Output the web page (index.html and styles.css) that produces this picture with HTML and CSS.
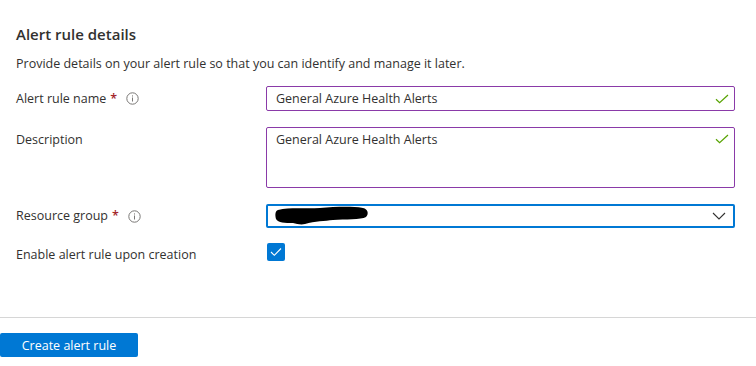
FILE: index.html
```html
<!DOCTYPE html>
<html>
<head>
<meta charset="utf-8">
<link rel="stylesheet" href="styles.css">
</head>
<body>
<div class="page">
  <section class="details">
    <h2 class="title">Alert rule details</h2>
    <p class="intro">Provide details on your alert rule so that you can identify and manage it later.</p>

    <div class="row">
      <div class="label">Alert rule name <span class="req">*</span>
        <svg class="info" width="13" height="13" viewBox="0 0 13 13"><circle cx="6.5" cy="6.5" r="5.7" fill="none" stroke="#797775" stroke-width="1"/><rect x="6" y="5.5" width="1" height="4" fill="#797775"/><rect x="6" y="3.4" width="1" height="1.1" fill="#797775"/></svg>
      </div>
      <div class="field input valid">
        <span class="value">General Azure Health Alerts</span>
        <svg class="check" width="14" height="10" viewBox="0 0 14 10"><path d="M1 5.2 L4.6 8.6 L13 1" fill="none" stroke="#57a300" stroke-width="1.2"/></svg>
      </div>
    </div>

    <div class="row top">
      <div class="label desc-label">Description</div>
      <div class="field textarea valid">
        <span class="value">General Azure Health Alerts</span>
        <svg class="check" width="14" height="10" viewBox="0 0 14 10"><path d="M1 5.2 L4.6 8.6 L13 1" fill="none" stroke="#57a300" stroke-width="1.2"/></svg>
      </div>
    </div>

    <div class="row">
      <div class="label">Resource group <span class="req">*</span>
        <svg class="info" width="13" height="13" viewBox="0 0 13 13"><circle cx="6.5" cy="6.5" r="5.7" fill="none" stroke="#797775" stroke-width="1"/><rect x="6" y="5.5" width="1" height="4" fill="#797775"/><rect x="6" y="3.4" width="1" height="1.1" fill="#797775"/></svg>
      </div>
      <div class="field select">
        <svg class="redact" width="94" height="20" viewBox="0 0 94 20"><path d="M3 4 C15 1 30 3 45 2 C60 1 75 0 88 2 C93 3 94 8 91 11 C86 14 70 13 58 14 C50 15 40 15 30 18 C26 19 22 18 18 17 C10 17 3 17 1 13 C0 9 0 5 3 4 Z" fill="#000"/></svg>
        <svg class="chev" width="14" height="8" viewBox="0 0 14 8"><path d="M1 1 L7 7 L13 1" fill="none" stroke="#323130" stroke-width="1.1"/></svg>
      </div>
    </div>

    <div class="row cb-row">
      <div class="label">Enable alert rule upon creation</div>
      <div class="checkbox">
        <svg width="12" height="10" viewBox="0 0 12 10"><path d="M1 5 L4.3 8.3 L11 1.5" fill="none" stroke="#fff" stroke-width="1.1"/></svg>
      </div>
    </div>
  </section>

  <footer class="footer">
    <button class="primary">Create alert rule</button>
  </footer>
</div>
</body>
</html>
```

FILE: styles.css
```css
* { box-sizing: border-box; }
html, body { margin: 0; padding: 0; background: #fff; }
body {
  font-family: "Open Sans", "Noto Sans", "Liberation Sans", sans-serif;
  color: #323130;
  font-size: 12.5px;
}
.page { width: 756px; height: 366px; display: flex; flex-direction: column; }
.details { padding: 23px 21px 0 16px; height: 318px; border-bottom: 1px solid #d6d6d6; }
.title { margin: 0; font-size: 15px; font-weight: 600; line-height: 22px; color: #323130; }
.intro { margin: 10px 0 13px; line-height: 18px; }
.row { display: flex; align-items: center; margin-bottom: 16px; }
.row.top { align-items: flex-start; }
.label { width: 250px; flex: none; display: flex; align-items: center; line-height: 18px; }
.desc-label { padding-top: 4px; }
.req { color: #a4262c; margin-left: 4px; font-weight: 600; }
.info { margin-left: 9px; }
.field { flex: 1; position: relative; border: 1px solid #8a3aa8; border-radius: 2px; display: flex; }
.input { height: 25px; align-items: center; padding: 0 9px; }
.textarea { height: 61px; align-items: flex-start; padding: 3px 9px; }
.textarea .value { line-height: 18px; }
.check { position: absolute; right: 5px; top: 7px; }
.textarea .check { top: 6px; }
.select { height: 24px; border: 2px solid #0078d4; align-items: center; padding: 0 7px; justify-content: space-between; }
.redact { display: block; }
.chev { margin-right: 0; }
.cb-row { margin-top: -1px; align-items: flex-start; }
.cb-row .label { padding-top: 3px; }
.checkbox { width: 18px; height: 18px; background: #0078d4; border-radius: 2px; display: flex; align-items: center; justify-content: center; margin-left: 1px; }
.footer { padding-top: 15px; }
.primary {
  width: 138px; height: 24px; border: none; border-radius: 2px; background: #0078d4; color: #fff;
  font-family: "Open Sans", "Noto Sans", "Liberation Sans", sans-serif; font-size: 12.5px; padding: 0; margin: 0;
}
```
